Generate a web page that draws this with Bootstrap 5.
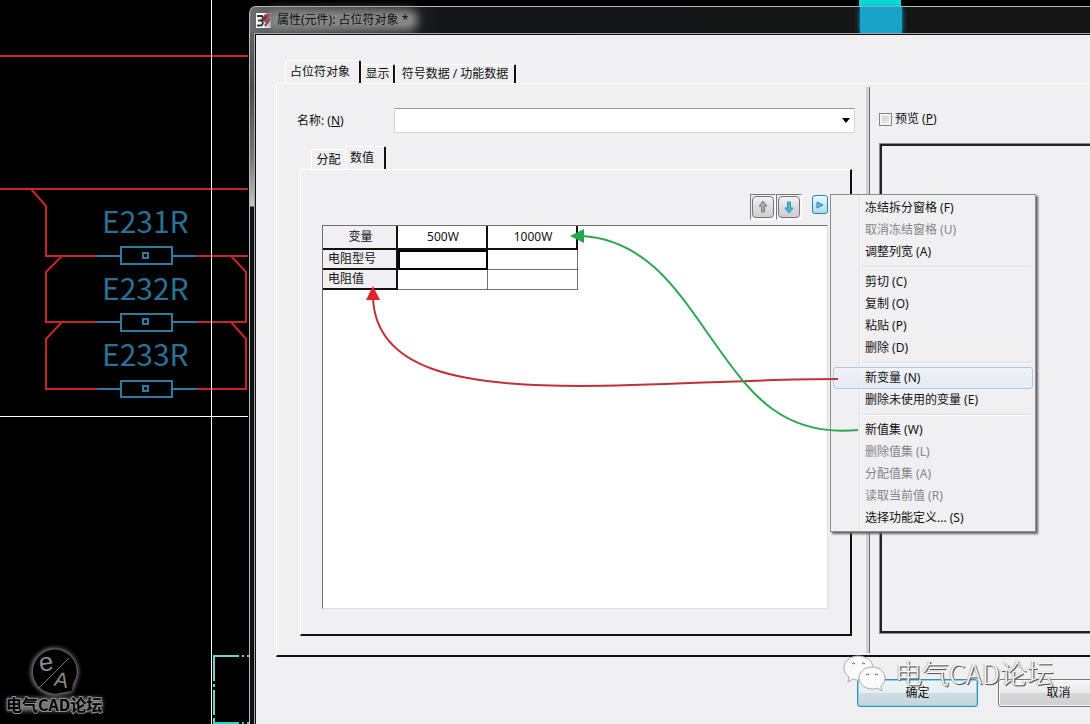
<!DOCTYPE html>
<html lang="zh-CN">
<head>
<meta charset="utf-8">
<meta name="viewport" content="width=device-width, initial-scale=1">
<title>属性(元件): 占位符对象</title>
<link href="https://cdn.jsdelivr.net/npm/bootstrap@5.3.0/dist/css/bootstrap.min.css" rel="stylesheet">
<style>
:root { --face: #f0eff1; --edge: #111; --shade: #6d6d72; }
body { background: #000; color: #111; font: 12px/16px "Noto Sans", "Noto Sans CJK SC", sans-serif; }
.cad { z-index: 0; }
.cad-label { font: 400 30px "Noto Sans CJK SC", sans-serif; fill: #2a7095; }
.brand-text { font: 700 16px "Noto Sans CJK SC", sans-serif; fill: #000; stroke: #8c8c8c; stroke-width: 2px; paint-order: stroke; }
.brand-letter { font: 26px "Liberation Sans", sans-serif; fill: #8a8a8a; }

/* Dialog window, running past the right edge of the desktop */
.dlg { margin: 6px -48px 0 249px; height: calc(100vh - 6px); z-index: 1; border: 1px solid #b9bcbe; border-width: 1px 0 0 1px; border-top-left-radius: 7px;
  background: linear-gradient(#6c6e6e 0, #4a4a4a 80px, #777 150px, #c4c4c4 199px, #0e1112 200px); padding-left: 4px; }
.dlg-title { height: 26px; margin-left: -4px; padding-left: 6px; border-top-left-radius: 6px; background: linear-gradient(90deg, #6b7070 0, #4a4d4e 30px, #141517 190px, #151614 100%); }
.dlg-title h1 { font-size: 12px; line-height: 16px; background: #858585; box-shadow: 0 0 8px 6px #858585; border-radius: 4px; height: 10px; margin-left: 2px; font-weight: 400; }
.dlg-title h1 span { position: relative; top: -3px; }
.cyan-glass { left: 610px; top: 0; width: 42px; height: 26px; background: #18a3c8; box-shadow: 0 0 5px #18a3c8; }
.client { background: var(--face); border: 1px solid #111; border-width: 1px 0 0 1px; outline: 1px solid #a5a5a5; padding: 25px 0 0 20px; margin: 1px 0 0 1px; }

/* Classic tab strips */
.tabs { height: 23px; }
.tabs button { border: 1px solid #fff; border-right: 2px solid var(--edge); border-bottom: 0; background: none; color: inherit; padding: 0; height: 19px; border-radius: 2px 2px 0 0; line-height: 16px; white-space: nowrap; }
.tabs button.active { height: 23px; }
.tabs .no-edge { border-right: 0; height: 20px; }
.outer-tabs { padding-left: 9px; }
.inner-tabs { padding-left: 11px; margin-top: 13px; }
.w-76 { width: 76px; } .w-34 { width: 34px; } .w-121 { width: 121px; } .w-41 { width: 41px; }
.outer-panel { border: 1px solid #fff; border-width: 1px 0 0 1px; border-bottom: 2px solid var(--edge); padding-bottom: 19px; }
.main-pane { padding: 24px 14px 0 23px; }
.inner-panel { border: 1px solid #fff; border-right: 2px solid var(--edge); border-bottom: 2px solid var(--edge); padding: 24px 22px 25px 21px; }
.name-combo { height: 25px; border: 1px solid #d5d5d8; border-top-color: #999; border-radius: 0; margin-right: -3px; padding: 0 8px; font-size: 12px;
  background: #fff url("data:image/svg+xml,%3Csvg xmlns='http://www.w3.org/2000/svg' viewBox='0 0 8 5'%3E%3Cpath d='M0 0h8L4 5z'/%3E%3C/svg%3E") no-repeat right 4px center / 8px 5px; }
.name-label { flex: 0 0 97px; margin-left: -3px; }

.tools { height: 31px; }
.tool-btn { width: 26px; height: 26px; padding: 1px; border: 1px solid #fff; border-top-color: #777; border-left-color: #777; background: var(--face); }
.tool-btn span { display: flex; align-items: center; justify-content: center; height: 100%; border: 1px solid #777; border-radius: 4px; background: linear-gradient(#f4f4f4, #dcdce0 50%, #cfcfd3); }
.play-slot { margin-left: 10px; }
.play-btn { width: 16px; height: 19px; margin-top: 1px; padding: 0; border: 1px solid #2d86a5; border-radius: 3px; background: linear-gradient(#eaf8ff, #a9dcf2); display: flex; align-items: center; justify-content: center; }
.grid-box { background: #fff; border: 1px solid #ddd; border-top: 1px solid var(--shade); border-left: 1px solid var(--shade); }

.values { border-collapse: separate; border-spacing: 0; table-layout: fixed; width: 255px; }
.values th { font-weight: 400; height: 20px; padding: 0 0 0 5px; background: #f0eff3; border-right: 2px solid #111; border-bottom: 2px solid #111; line-height: 16px; }
.values thead th { height: 24px; text-align: center; padding: 0 0 0 2px; }
.values thead th + th { background: #fff; }
.values td { border-right: 1px solid var(--shade); border-bottom: 1px solid var(--shade); padding: 0; height: 20px; }
.values td.current { outline: 2px solid #000; outline-offset: -2px; }

/* Context menu */
.ctx { top: 0; left: 2px; width: 206px; padding: 2px; z-index: 1000; background: linear-gradient(90deg, #f0eff1 28px, #dedee1 28px, #dedee1 29px, #fff 29px, #fff 30px, #f0eff1 30px); border: 1px solid #8d8d90; box-shadow: 2px 2px 2px #666; }
.ctx button { display: block; width: 100%; height: 22px; padding: 0 0 0 31px; border: 1px solid transparent; border-radius: 3px; background: none; text-align: left; color: #111; line-height: 20px; word-spacing: normal; }
.ctx button:disabled { color: #858588; }
.ctx button.hot { border-color: #aacbe8; background: linear-gradient(#f0f4fa99, #dfe9f599); }
.ctx hr { margin: 3px 2px 3px 29px; border: 0; border-top: 1px solid #dcdce0; border-bottom: 1px solid #fff; opacity: 1; height: 2px; }
.arrows { top: 0; left: 0; width: calc(100% + 34px); height: 215px; z-index: 1100; pointer-events: none; }

.divider { width: 4px; margin: 3px 0 -17px; background: #cfd0d9; border-right: 1px solid #6a6a70; }
.side-pane { width: 268px; padding: 27px 12px 0 9px; }
.tick { appearance: none; width: 13px; height: 13px; border: 1px solid #858585; background: linear-gradient(135deg, #c4c6c9, #f6f6f6); box-shadow: inset 0 0 0 2px #f2f2f2; margin: 0 3px 0 0; }
.preview { border: 2px solid #222; border-right: 0; outline: 1px solid #8b8b8b; margin: 17px 0 3px 1px; }

.actions { height: 67px; padding: 22px 19px 0 0; gap: 20px; }
.push { width: 121px; height: 28px; padding: 0; border: 1px solid #777; border-radius: 3px; background: linear-gradient(#f3f3f3, #ebebeb 50%, #d8d8da 50%, #cecfd1); color: #111; box-shadow: inset 0 0 0 1px #fafafa; }
.push.default { border-color: #3c8fac; box-shadow: inset 0 0 0 1px #7fd3ee; background: linear-gradient(#eef5f8, #e4eef2 50%, #d0dde3 50%, #c5d6dc); }
.wm { top: -2px; right: 84px; height: 40px; pointer-events: none; }
.wm-text { font: 300 27px/36px "Noto Sans CJK SC", sans-serif; color: #fafafa; text-shadow: 1px 1px 0 #555, 1px 1px 1px #888, -1px 0 0 #bbb; }
</style>
</head>
<body class="vh-100 overflow-hidden position-relative">

<!-- Schematic drawing behind the dialog -->
<svg class="cad position-absolute top-0 start-0" width="920" height="724" aria-hidden="true">
  <g fill="none" stroke="#c9242c" stroke-width="2">
    <path d="M0 56H248M0 189H248M31 189L46 206V256H97M197 256H248M62 256L46 272V322H97M197 322H246V272L231 256M62 322L46 339V389H97M197 389H246V339L231 322"/>
  </g>
  <g fill="none" stroke="#2e7ba2" stroke-width="2">
    <path d="M97 256h24M172 256h25M121 247h51v17h-51zM143 253h5v5h-5z"/>
    <path d="M97 322h24M172 322h25M121 314h51v17h-51zM143 319h5v5h-5z"/>
    <path d="M97 389h24M172 389h25M121 381h51v16h-51zM143 386h5v5h-5z"/>
  </g>
  <text class="cad-label" x="102" y="233">E231R</text>
  <text class="cad-label" x="102" y="300">E232R</text>
  <text class="cad-label" x="102" y="366">E233R</text>
  <path d="M211.5 0V724M0 416.500H248" stroke="#fff"/>
  <path d="M214 681V656H239M242 656h2M247 656h2M214 684v3M214 690v25M214 718v6" fill="none" stroke="#6fd0cc" stroke-width="2"/>
  <path d="M213 723H239M242 723h2M247 723h2" stroke="#19d8d0" stroke-width="2"/>
  <rect x="859" width="42" height="6" fill="#0cd8d2"/>
  <defs><filter id="glow" x="-30%" y="-30%" width="160%" height="160%"><feGaussianBlur stdDeviation="2"/></filter></defs>
  <path d="M71 691L60 693A22 22 0 1 1 74 682Z" fill="#888" stroke="#888" stroke-width="3" filter="url(#glow)"/>
  <path d="M72 691L60 693A22 22 0 1 1 73 684Z" fill="#000"/>
  <path d="M39 688L69 658" stroke="#777"/>
  <text class="brand-letter" x="39" y="671" transform="rotate(-8 45 665)">e</text>
  <text class="brand-letter" font-size="20" x="53" y="687" transform="rotate(12 60 680) translate(12 137) scale(.8)">A</text>
  <rect x="7" y="698" width="95" height="13" fill="#777" filter="url(#glow)"/>
  <text class="brand-text" x="6" y="711">电气CAD论坛</text>
</svg>

<main class="dlg position-relative d-flex flex-column">
  <header class="dlg-title d-flex align-items-center position-relative flex-shrink-0">
    <svg width="15" height="15" viewBox="0 0 15 15" aria-hidden="true">
      <rect width="15" height="15" fill="#fff"/><path d="M1 3h5q2 2 0 4.500H2M6 8q2 3-1 4.500H1" stroke="#333" stroke-width="2" fill="none"/><path d="M8 2l4-2 3 1-1 6-4 3-3-2z" fill="#c2283a"/><path d="M6 8l5-5M9 13l5-7" stroke="#5c1c24" stroke-width="2"/>
    </svg>
    <h1 class="mb-0 px-1"><span>属性(元件): 占位符对象 *</span></h1>
    <div class="cyan-glass position-absolute"></div>
  </header>

  <div class="client flex-fill d-flex flex-column position-relative">
    <nav class="tabs outer-tabs d-flex align-items-end" role="tablist">
      <button type="button" role="tab" class="active w-76 text-start ps-1">占位符对象</button>
      <button type="button" role="tab" class="w-34">显示</button>
      <button type="button" role="tab" class="w-121">符号数据 / 功能数据</button>
    </nav>

    <section class="outer-panel flex-fill d-flex">
      <div class="main-pane flex-fill d-flex flex-column">
        <div class="d-flex align-items-center">
          <label class="name-label" for="name">名称: (<u>N</u>)</label>
          <select id="name" class="form-select name-combo"><option></option></select>
        </div>
        <nav class="tabs inner-tabs d-flex align-items-end" role="tablist">
          <button type="button" role="tab" class="no-edge w-34">分配</button>
          <button type="button" role="tab" class="active w-41 text-start ps-1">数值</button>
        </nav>
        <div class="inner-panel flex-fill d-flex flex-column">
          <div class="tools d-flex justify-content-end align-items-start">
            <button type="button" class="tool-btn" aria-label="上移"><span><svg width="10" height="14" viewBox="0 0 10 14"><path d="M5 1L9 6H6.500V12H3.500V6H1z" fill="#aaa" stroke="#808084"/></svg></span></button>
            <button type="button" class="tool-btn" aria-label="下移"><span><svg width="10" height="14" viewBox="0 0 10 14"><path d="M5 13L9 8H6.500V2H3.500V8H1z" fill="#45b5e0" stroke="#3a93b8"/></svg></span></button>
            <button type="button" class="play-btn play-slot" aria-label="菜单" aria-expanded="true"><svg width="8" height="8" viewBox="0 0 8 8"><path d="M1 1L7 4L1 7z" fill="#72b4d0" stroke="#3984a5"/></svg></button>
            <div class="position-relative">
              <div class="ctx position-absolute" role="menu">
                <button type="button" role="menuitem">冻结拆分窗格 (F)</button>
                <button type="button" role="menuitem" disabled>取消冻结窗格 (U)</button>
                <button type="button" role="menuitem">调整列宽 (A)</button>
                <hr>
                <button type="button" role="menuitem">剪切 (C)</button>
                <button type="button" role="menuitem">复制 (O)</button>
                <button type="button" role="menuitem">粘贴 (P)</button>
                <button type="button" role="menuitem">删除 (D)</button>
                <hr>
                <button type="button" role="menuitem" class="hot">新变量 (N)</button>
                <button type="button" role="menuitem">删除未使用的变量 (E)</button>
                <hr>
                <button type="button" role="menuitem">新值集 (W)</button>
                <button type="button" role="menuitem" disabled>删除值集 (L)</button>
                <button type="button" role="menuitem" disabled>分配值集 (A)</button>
                <button type="button" role="menuitem" disabled>读取当前值 (R)</button>
                <button type="button" role="menuitem">选择功能定义... (S)</button>
              </div>
            </div>
          </div>
          <div class="grid-box flex-fill position-relative">
            <table class="values">
              <colgroup><col style="width:75px"><col style="width:90px"><col style="width:90px"></colgroup>
              <thead><tr><th scope="col">变量</th><th scope="col">500W</th><th scope="col">1000W</th></tr></thead>
              <tbody>
                <tr><th scope="row">电阻型号</th><td class="current"></td><td></td></tr>
                <tr><th scope="row">电阻值</th><td></td><td></td></tr>
              </tbody>
            </table>
            <svg class="arrows position-absolute" viewBox="0 0 538 215" preserveAspectRatio="none" aria-hidden="true">
              <path d="M50 72C53 144 137 160 257 160C342 160 422 153 515 153" fill="none" stroke="#c23038" stroke-width="2"/>
              <path d="M50 60L57 74H43z" fill="#e0242c"/>
              <path d="M259 10C327 14 359 72 393 119C429 170 461 211 535 204" fill="none" stroke="#2fa653" stroke-width="2"/>
              <path d="M247 10L261 3V17z" fill="#22a84a"/>
            </svg>
          </div>
        </div>
      </div>
      <div class="divider flex-shrink-0"></div>
      <div class="side-pane flex-shrink-0 d-flex flex-column">
        <div class="d-flex align-items-center">
          <input class="tick" type="checkbox" id="preview">
          <label for="preview">预览 (<u>P</u>)</label>
        </div>
        <div class="preview flex-fill"></div>
      </div>
    </section>

    <footer class="actions d-flex justify-content-end position-relative flex-shrink-0">
      <button type="button" class="push default">确定</button>
      <button type="button" class="push">取消</button>
      <div class="wm position-absolute d-flex">
        <svg width="44" height="38" viewBox="0 0 44 38" aria-hidden="true">
          <g fill="#fafafa" stroke="#aaa">
            <path d="M15 1C7 1 1 6 1 13c0 4 2 7 5 9l-1 5 5-3c2 1 4 1 6 1 8 0 14-5 14-12S23 1 15 1z"/>
            <path d="M29 12c-7 0-13 5-13 11s6 11 13 11c2 0 4 0 5-1l5 3-1-5c3-2 4-5 4-8 0-6-6-11-13-11z"/>
          </g>
          <g fill="none" stroke="#555"><path d="M9 9q1.500-2 3 0M19 9q1.500-2 3 0M23 20q1.500-2 3 0M32 20q1.500-2 3 0"/></g>
        </svg>
        <span class="wm-text ms-2 text-nowrap">电气CAD论坛</span>
      </div>
    </footer>
  </div>
</main>
<script src="https://cdn.jsdelivr.net/npm/bootstrap@5.3.0/dist/js/bootstrap.bundle.min.js"></script>
</body>
</html>
